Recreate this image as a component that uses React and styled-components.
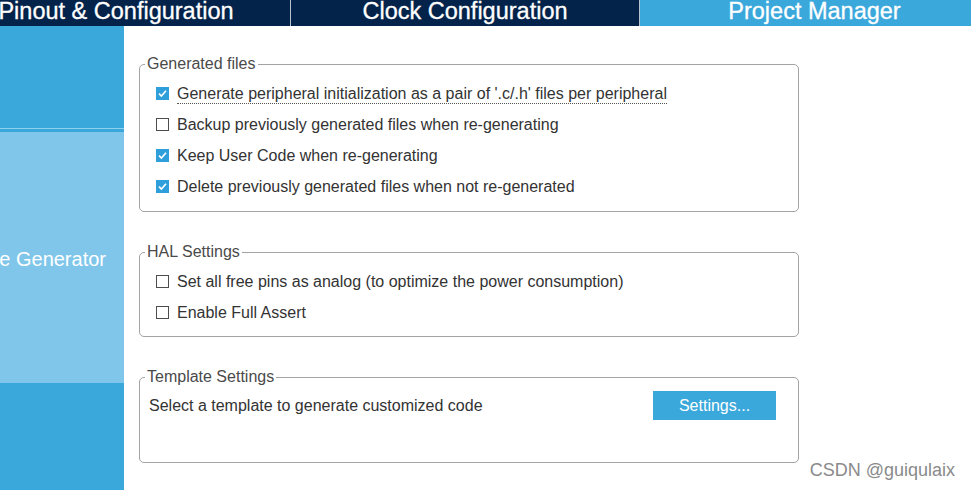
import React from "react";
import styled, { createGlobalStyle } from "styled-components";

const GlobalStyle = createGlobalStyle`
  html, body { margin: 0; padding: 0; background: #ffffff; }
  body { font-family: "Liberation Sans", Arial, sans-serif; }
  * { box-sizing: border-box; }
`;

const Page = styled.div`
  position: relative;
  width: 971px;
  height: 490px;
  display: flex;
  flex-direction: column;
  overflow: hidden;
  background: #ffffff;
`;

const Header = styled.div`
  height: 26px;
  background: #03234b;
  overflow: hidden;
  flex: none;
`;

const TabStrip = styled.div`
  display: flex;
  margin-left: -58px;
  height: 100%;
`;

const Tab = styled.div`
  flex: none;
  width: 349px;
  height: 26px;
  display: flex;
  justify-content: center;
  align-items: flex-end;
  padding-bottom: 3px;
  background: ${(p) => (p.$active ? "#3ba8dc" : "#03234b")};
  border-right: ${(p) => (p.$last ? "none" : "1px solid #b9c3d0")};
  color: #ffffff;
  font-size: 23.5px;
  font-weight: normal;
  line-height: 24px;
  -webkit-text-stroke: 0.3px #ffffff;
  white-space: nowrap;
`;

const Body = styled.div`
  flex: 1;
  display: flex;
  min-height: 0;
`;

const Sidebar = styled.div`
  width: 124px;
  flex: none;
  display: flex;
  flex-direction: column;
  background: #3aa8db;
  overflow: hidden;
`;

const SideItem = styled.div`
  flex: ${(p) => (p.$grow ? "1" : "none")};
  height: ${(p) => (p.$h ? `${p.$h}px` : "auto")};
  margin-top: ${(p) => (p.$gap ? `${p.$gap}px` : "0")};
  background: ${(p) => (p.$light ? "#80c6ea" : "#3aa8db")};
  border-bottom: ${(p) => (p.$line ? "1px solid #8fcff0" : "none")};
  display: flex;
  justify-content: flex-end;
  align-items: center;
  padding: 3px 18px 0 0;
  color: #ffffff;
  font-size: 20px;
  white-space: nowrap;
  overflow: hidden;
`;

const Content = styled.div`
  flex: 1;
  padding: 29px 0 0 15px;
  display: flex;
  flex-direction: column;
  align-items: flex-start;
  background: #ffffff;
`;

const Group = styled.fieldset`
  width: 660px;
  margin: ${(p) => p.$mt || 0}px 0 0 0;
  padding: 5px 0 ${(p) => p.$pb}px 0;
  border: 1px solid #a3a3a3;
  border-radius: 5px;
  min-width: 0;
`;

const Legend = styled.legend`
  margin-left: 5px;
  padding: 0 2px;
  font-size: 16px;
  line-height: 18px;
  color: #4a4a4a;
`;

const Row = styled.div`
  height: 31px;
  display: flex;
  align-items: center;
  padding-left: 16px;
  gap: 8px;
  font-size: 16px;
  color: #333333;
`;

const Box = styled.span`
  width: 13px;
  height: 13px;
  flex: none;
  border: 1px solid ${(p) => (p.$checked ? "#2f9fdc" : "#4d4d4d")};
  background: ${(p) => (p.$checked ? "#2f9fdc" : "#ffffff")};
  display: flex;
  align-items: center;
  justify-content: center;
`;

const Label = styled.span`
  line-height: 18px;
  border-bottom: 1px ${(p) => (p.$focus ? "dotted #555555" : "solid transparent")};
  margin-top: 1px;
`;

const TemplateRow = styled.div`
  height: 29px;
  display: flex;
  align-items: center;
  justify-content: space-between;
  padding: 0 22px 0 9px;
  font-size: 16px;
  color: #333333;
`;

const Button = styled.button`
  width: 123px;
  height: 29px;
  border: none;
  background: #3ba8dc;
  color: #ffffff;
  font-family: "Liberation Sans", Arial, sans-serif;
  font-size: 16px;
  padding: 0;
  cursor: pointer;
`;

const Watermark = styled.div`
  position: absolute;
  right: 16px;
  bottom: 9px;
  font-family: "Liberation Sans", Arial, sans-serif;
  font-size: 18px;
  line-height: 22px;
  color: #8a8a8a;
`;

const Check = () => (
  <svg width="11" height="11" viewBox="0 0 11 11">
    <path d="M2 5.6 L4.4 8 L9 2.8" fill="none" stroke="#ffffff" strokeWidth="1.6" />
  </svg>
);

const CheckRow = ({ checked, focus, children }) => (
  <Row>
    <Box $checked={checked}>{checked && <Check />}</Box>
    <Label $focus={focus}>{children}</Label>
  </Row>
);

export default function App() {
  return (
    <>
      <GlobalStyle />
      <Page>
        <Header>
          <TabStrip>
            <Tab>Pinout &amp; Configuration</Tab>
            <Tab>Clock Configuration</Tab>
            <Tab $active $last>Project Manager</Tab>
          </TabStrip>
        </Header>
        <Body>
          <Sidebar>
            <SideItem $h={103} $line />
            <SideItem $h={251} $gap={3} $light>Code Generator</SideItem>
            <SideItem $grow />
          </Sidebar>
          <Content>
            <Group $pb={9}>
              <Legend>Generated files</Legend>
              <CheckRow checked focus>
                Generate peripheral initialization as a pair of '.c/.h' files per peripheral
              </CheckRow>
              <CheckRow>Backup previously generated files when re-generating</CheckRow>
              <CheckRow checked>Keep User Code when re-generating</CheckRow>
              <CheckRow checked>Delete previously generated files when not re-generated</CheckRow>
            </Group>
            <Group $mt={31} $pb={8}>
              <Legend>HAL Settings</Legend>
              <CheckRow>Set all free pins as analog (to optimize the power consumption)</CheckRow>
              <CheckRow>Enable Full Assert</CheckRow>
            </Group>
            <Group $mt={31} $pb={42}>
              <Legend>Template Settings</Legend>
              <TemplateRow>
                <span>Select a template to generate customized code</span>
                <Button>Settings...</Button>
              </TemplateRow>
            </Group>
          </Content>
        </Body>
        <Watermark>CSDN @guiqulaix</Watermark>
      </Page>
    </>
  );
}
